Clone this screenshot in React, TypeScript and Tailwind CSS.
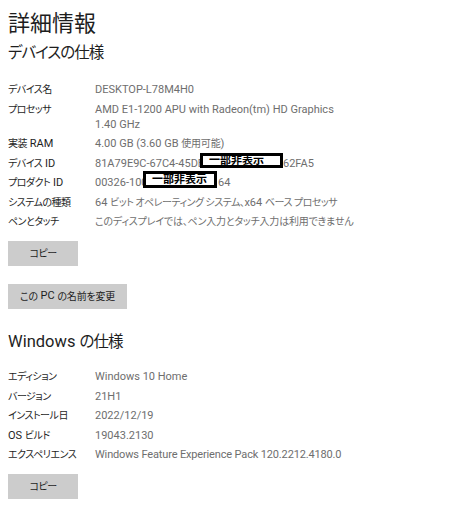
import React from "react";

const font = {
  fontFamily: 'Roboto, "Noto Sans CJK JP", sans-serif',
};

function J({ children }: { children: React.ReactNode }) {
  return <span className="text-[10px] tracking-[-0.2px]">{children}</span>;
}

function L({ children }: { children: React.ReactNode }) {
  return <span className="text-[10px] tracking-[-0.5px]">{children}</span>;
}

function Row({ label, children }: { label: React.ReactNode; children: React.ReactNode }) {
  return (
    <>
      <div className="text-[#1e1e1e] whitespace-nowrap">{label}</div>
      <div className="text-[#6e6e6e] whitespace-nowrap">{children}</div>
    </>
  );
}

function Btn({ children, w }: { children: React.ReactNode; w: string }) {
  return (
    <div className={`${w} h-[25px] bg-[#cccccc] flex items-center justify-center text-[11px] text-[#1e1e1e]`}>
      {children}
    </div>
  );
}

function Redact({ w, h, top, left }: { w: string; h: string; top: string; left: string }) {
  return (
    <span
      className={`absolute ${w} ${h} ${top} ${left} border-[3px] border-black bg-white flex items-center pl-[6px] text-[11px] font-bold text-black leading-none`}
    >
      一部非表示
    </span>
  );
}

export default function App() {
  return (
    <div
      className="w-[449px] h-[512px] bg-white pl-[8px] pt-[9px] [font-feature-settings:'palt'] overflow-hidden"
      style={font}
    >
      <div className="text-[22px] leading-[30px] text-[#1e1e1e]">詳細情報</div>
      <div className="text-[15.5px] leading-[24px] tracking-[-1px] text-[#1e1e1e] mt-[2px]">デバイスの仕様</div>

      <div className="grid grid-cols-[87px_1fr] gap-y-[4.5px] text-[11px] leading-[15px] mt-[17px]">
        <Row label={<L>デバイス名</L>}>DESKTOP-L78M4H0</Row>
        <Row label={<L>プロセッサ</L>}>
          AMD E1-1200 APU with Radeon(tm) HD Graphics
          <br />
          1.40 GHz
        </Row>
        <Row label={<><L>実装</L> RAM</>}>
          4.00 GB (3.60 GB <J>使用可能</J>)
        </Row>
        <Row label={<><L>デバイス</L> ID</>}>
          <div className="relative flex">
            <span className="w-[188px]">81A79E9C-67C4-45DE</span>
            <span>62FA5</span>
            <Redact w="w-[83px]" h="h-[15px]" top="top-[-2.5px]" left="left-[105px]" />
          </div>
        </Row>
        <Row label={<><L>プロダクト</L> ID</>}>
          <div className="relative flex">
            <span className="w-[123px]">00326-1000</span>
            <span>64</span>
            <Redact w="w-[74px]" h="h-[17px]" top="top-[-4px]" left="left-[48px]" />
          </div>
        </Row>
        <Row label={<L>システムの種類</L>}>
          64 <L>ビット オペレーティング システム、</L>x64 <L>ベース プロセッサ</L>
        </Row>
        <Row label={<L>ペンとタッチ</L>}>
          <J>このディスプレイでは、ペン入力とタッチ入力は利用できません</J>
        </Row>
      </div>

      <div className="mt-[12px]">
        <Btn w="w-[70px]">
          <L>コピー</L>
        </Btn>
      </div>
      <div className="mt-[18px]">
        <Btn w="w-[119px]">
          <J>この</J>&nbsp;PC&nbsp;<J>の名前を変更</J>
        </Btn>
      </div>

      <div className="text-[16.5px] leading-[24px] text-[#1e1e1e] mt-[21px]">
        Windows <span className="text-[15.5px] tracking-[-1px]">の仕様</span>
      </div>

      <div className="grid grid-cols-[87px_1fr] gap-y-[4.5px] text-[11px] leading-[15px] mt-[15px]">
        <Row label={<L>エディション</L>}>Windows 10 Home</Row>
        <Row label={<L>バージョン</L>}>21H1</Row>
        <Row label={<L>インストール日</L>}>2022/12/19</Row>
        <Row label={<>OS <L>ビルド</L></>}>19043.2130</Row>
        <Row label={<L>エクスペリエンス</L>}>
          <span className="tracking-[-0.15px]">Windows Feature Experience Pack 120.2212.4180.0</span>
        </Row>
      </div>

      <div className="mt-[12px]">
        <Btn w="w-[70px]">
          <L>コピー</L>
        </Btn>
      </div>
    </div>
  );
}
